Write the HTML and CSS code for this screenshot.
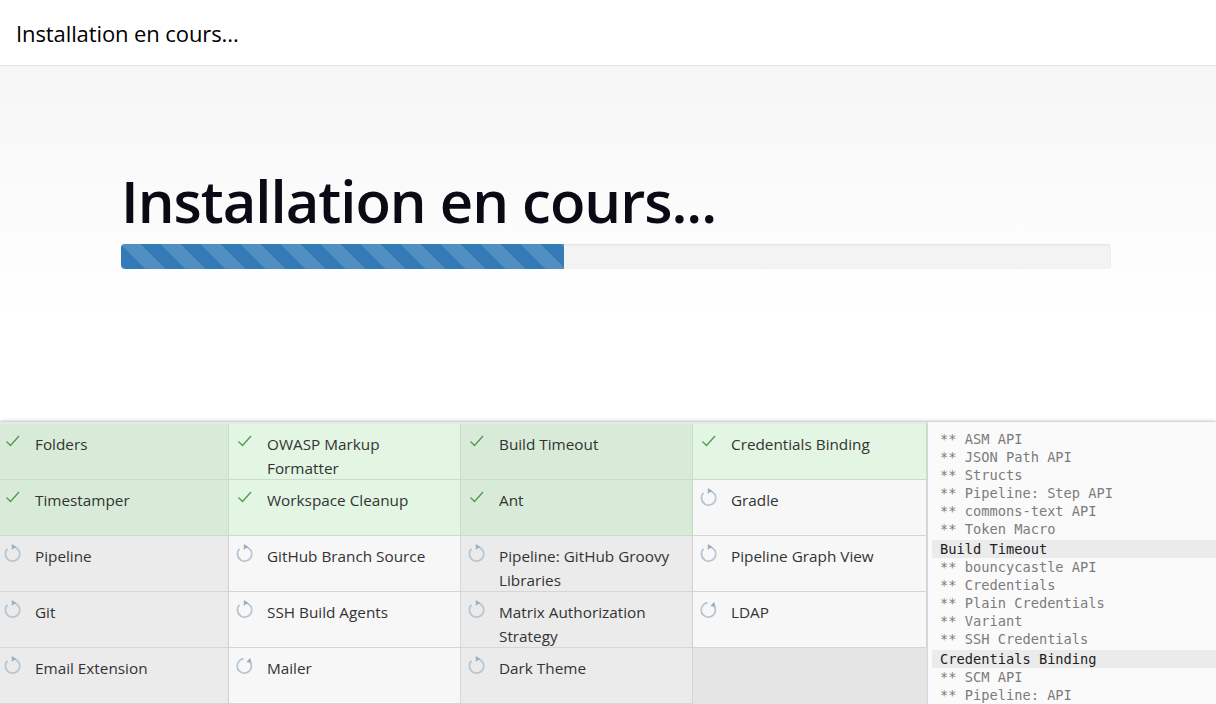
FILE: index.html
```html
<!DOCTYPE html>
<html lang="fr">
<head>
<meta charset="utf-8">
<title>Installation en cours...</title>
<link rel="stylesheet" href="styles.css">
</head>
<body>
<svg width="0" height="0" class="defs">
  <defs>
    <symbol id="ok" viewBox="0 0 16 14">
      <path d="M1.5 7.5 L5.5 11.5 L14 2" fill="none" stroke="#4f9a4f" stroke-width="1.3"/>
    </symbol>
    <symbol id="spin" viewBox="0 0 20 20">
      <path d="M10 3 A7.5 7.5 0 1 1 4.8 5.2" fill="none" stroke="#b6c6d3" stroke-width="1.8"/>
      <path d="M9.3 0 L13.8 3 L9.3 6 Z" fill="#98afc3"/>
    </symbol>
  </defs>
</svg>
<div class="page">
  <header class="topbar">
    <h1 class="topbar-title">Installation en cours...</h1>
  </header>
  <section class="hero">
    <h2 class="hero-title">Installation en cours...</h2>
    <div class="progress"><div class="progress-bar" style="width:44.7%"></div></div>
  </section>
  <section class="install">
    <div class="plugins">
      <div class="cell ok odd"><svg class="ico"><use href="#ok"/></svg><span>Folders</span></div>
      <div class="cell ok even"><svg class="ico"><use href="#ok"/></svg><span>OWASP Markup Formatter</span></div>
      <div class="cell ok odd"><svg class="ico"><use href="#ok"/></svg><span>Build Timeout</span></div>
      <div class="cell ok even"><svg class="ico"><use href="#ok"/></svg><span>Credentials Binding</span></div>

      <div class="cell ok odd"><svg class="ico"><use href="#ok"/></svg><span>Timestamper</span></div>
      <div class="cell ok even"><svg class="ico"><use href="#ok"/></svg><span>Workspace Cleanup</span></div>
      <div class="cell ok odd"><svg class="ico"><use href="#ok"/></svg><span>Ant</span></div>
      <div class="cell wait even"><svg class="ico spin"><use href="#spin"/></svg><span>Gradle</span></div>

      <div class="cell wait odd"><svg class="ico spin"><use href="#spin"/></svg><span>Pipeline</span></div>
      <div class="cell wait even"><svg class="ico spin"><use href="#spin"/></svg><span>GitHub Branch Source</span></div>
      <div class="cell wait odd"><svg class="ico spin"><use href="#spin"/></svg><span>Pipeline: GitHub Groovy Libraries</span></div>
      <div class="cell wait even"><svg class="ico spin"><use href="#spin"/></svg><span>Pipeline Graph View</span></div>

      <div class="cell wait odd"><svg class="ico spin"><use href="#spin"/></svg><span>Git</span></div>
      <div class="cell wait even"><svg class="ico spin"><use href="#spin"/></svg><span>SSH Build Agents</span></div>
      <div class="cell wait odd"><svg class="ico spin"><use href="#spin"/></svg><span>Matrix Authorization Strategy</span></div>
      <div class="cell wait even"><svg class="ico spin rot"><use href="#spin"/></svg><span>LDAP</span></div>

      <div class="cell wait odd"><svg class="ico spin"><use href="#spin"/></svg><span>Email Extension</span></div>
      <div class="cell wait even"><svg class="ico spin rot"><use href="#spin"/></svg><span>Mailer</span></div>
      <div class="cell wait odd"><svg class="ico spin"><use href="#spin"/></svg><span>Dark Theme</span></div>
      <div class="cell empty"></div>
    </div>
    <div class="log">
      <div class="dep">** ASM API</div>
      <div class="dep">** JSON Path API</div>
      <div class="dep">** Structs</div>
      <div class="dep">** Pipeline: Step API</div>
      <div class="dep">** commons-text API</div>
      <div class="dep">** Token Macro</div>
      <div class="name">Build Timeout</div>
      <div class="dep">** bouncycastle API</div>
      <div class="dep">** Credentials</div>
      <div class="dep">** Plain Credentials</div>
      <div class="dep">** Variant</div>
      <div class="dep">** SSH Credentials</div>
      <div class="name">Credentials Binding</div>
      <div class="dep">** SCM API</div>
      <div class="dep">** Pipeline: API</div>
    </div>
  </section>
</div>
</body>
</html>
```

FILE: styles.css
```css
html, body {
  margin: 0;
  padding: 0;
  height: 100%;
  overflow: hidden;
}
body {
  font-family: "Open Sans", "Noto Sans", "Liberation Sans", sans-serif;
  color: #333;
  background: #fff;
}
.defs {
  position: absolute;
  width: 0;
  height: 0;
}
.page {
  display: flex;
  flex-direction: column;
  height: 704px;
}
.topbar {
  height: 65px;
  border-bottom: 1px solid #e5e5e5;
  display: flex;
  align-items: center;
  padding-left: 16px;
  flex: none;
}
.topbar-title {
  margin: 0;
  font-size: 22px;
  font-weight: 400;
  color: #000;
  letter-spacing: -0.1px;
}
.hero {
  height: 356px;
  flex: none;
  background: linear-gradient(#f6f6f6, #fff 70%);
  padding: 99px 105px 0 121px;
  box-sizing: border-box;
}
.hero-title {
  margin: 0;
  font-size: 58px;
  font-weight: 560;
  color: #0a0a14;
  line-height: 72px;
  letter-spacing: -1px;
}
.progress {
  margin-top: 7px;
  height: 25px;
  background: #f3f3f3;
  border-radius: 4px;
  box-shadow: inset 0 1px 2px rgba(0,0,0,.08);
  overflow: hidden;
}
.progress-bar {
  height: 100%;
  background-color: #337ab7;
  background-image: linear-gradient(45deg, rgba(255,255,255,.15) 25%, transparent 25%, transparent 50%, rgba(255,255,255,.15) 50%, rgba(255,255,255,.15) 75%, transparent 75%, transparent);
  background-size: 40px 40px;
}
.install {
  flex: 1;
  display: flex;
  min-height: 0;
  box-shadow: 0 -1px 3px rgba(0,0,0,.25);
  position: relative;
}
.plugins {
  width: 930px;
  flex: none;
  margin-left: -3px;
  display: grid;
  grid-template-columns: 232px 232px 232px 234px;
  grid-auto-rows: 56px;
  background: #e5e5e5;
  border-top: 2px solid #e8e8e8;
  font-size: 15.3px;
  line-height: 24px;
}
.cell {
  display: flex;
  align-items: flex-start;
  box-sizing: border-box;
  border-right: 1px solid #d6d6d6;
  border-bottom: 1px solid #d6d6d6;
  padding: 8px 10px 0 8px;
  overflow: hidden;
}
.cell span {
  flex: 1;
}
.ok { border-color: #c9ddc9; }
.ok.odd { background: #d8ebd8; }
.ok.even { background: #e3f5e3; }
.wait.odd { background: #ebebeb; }
.wait.even { background: #f7f7f7; box-shadow: 0 1px 2px rgba(0,0,0,.08); }
.empty {
  background: #e5e5e5;
  border: none;
}
.ico {
  width: 16px;
  height: 14px;
  margin: 2px 14px 0 0;
  flex: none;
}
.ico.spin {
  width: 19px;
  height: 19px;
  margin: 0 13px 0 -2px;
}
.ico.rot {
  transform: rotate(40deg);
}
.log {
  flex: 1;
  background: #fafafa;
  border-left: 1px solid #d6d6d6;
  padding: 8px 0 0 4px;
  font-family: "DejaVu Sans Mono", "Liberation Mono", monospace;
  font-size: 13.7px;
  line-height: 18px;
  overflow: hidden;
}
.log .dep {
  color: #7c7c7c;
  padding-left: 8px;
  white-space: pre;
}
.log .name {
  color: #222;
  background: #ebebeb;
  padding-left: 8px;
  margin-top: 2px;
  white-space: pre;
}
```
